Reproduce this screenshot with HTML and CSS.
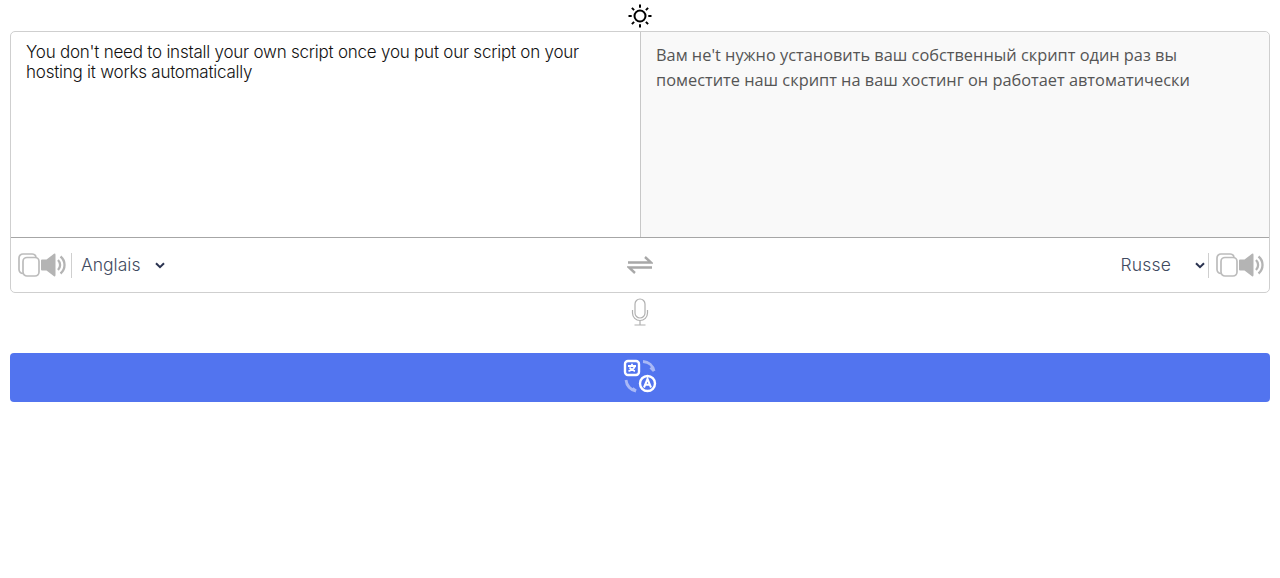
FILE: index.html
```html
<!DOCTYPE html>
<html lang="en">
<head>
  <meta charset="UTF-8" />
  <meta name="viewport" content="width=device-width, initial-scale=1.0" />
  <title>Translator</title>
  <link rel="stylesheet" href="styles.css">
</head>
<body>
  <div class="theme">
    <svg width="26" height="26" viewBox="0 0 26 26" fill="none" stroke="#000" stroke-width="2">
      <circle cx="13" cy="13" r="5.500"/>
      <path d="M13 1.500v3.200M13 21.300v3.200M1.500 13h3.200M21.300 13h3.200M4.900 4.900l2.200 2.200M18.900 18.900l2.200 2.200M4.900 21.100l2.200-2.200M18.900 7.100l2.200-2.200"/>
    </svg>
  </div>

  <div class="box">
    <div class="panes">
      <div class="pane source">You don't need to install your own script once you put our script on your hosting it works automatically</div>
      <div class="pane target">Вам не't нужно установить ваш собственный скрипт один раз вы поместите наш скрипт на ваш хостинг он работает автоматически</div>
    </div>
    <div class="toolbar">
      <div class="side">
        <svg class="copy" width="22" height="24" viewBox="0 0 22 24" fill="none" stroke="#bcbcbc" stroke-width="1.700">
          <rect x="5" y="4.500" width="16" height="18.500" rx="4"/>
          <path d="M5 20.500A4 4 0 0 1 1 16.500V5a4 4 0 0 1 4-4h9a4 4 0 0 1 4 3.500"/>
        </svg>
        <svg class="speaker" width="25" height="24" viewBox="0 0 25 24">
          <path d="M0 7.500Q0 6.500 1 6.500h4.500L13 .8Q14.500 0 14.500 2v20Q14.500 24 13 23.200L5.500 17.500H1Q0 17.500 0 16.500z" fill="#b4b4b4"/>
          <path d="M17 7a7 7 0 0 1 0 10M19.500 3.500a11 11 0 0 1 0 17" fill="none" stroke="#b4b4b4" stroke-width="2.300"/>
        </svg>
        <span class="divider"></span>
        <span class="lang lang-left">Anglais</span>
        <svg class="chevron" width="10" height="7" viewBox="0 0 10 7" fill="none" stroke="#2a3350" stroke-width="2"><path d="M1 1.200l4 4 4-4"/></svg>
      </div>
      <svg class="swap" width="26" height="18" viewBox="0 0 26 18" fill="none" stroke="#a8a8a8" stroke-width="2.400">
        <path d="M1 6.500h23L18 1M25 11.500H2L8 17"/>
      </svg>
      <div class="side side-right">
        <span class="lang lang-right">Russe</span>
        <svg class="chevron" width="10" height="7" viewBox="0 0 10 7" fill="none" stroke="#2a3350" stroke-width="2"><path d="M1 1.200l4 4 4-4"/></svg>
        <span class="divider divider-right"></span>
        <svg class="copy" width="22" height="24" viewBox="0 0 22 24" fill="none" stroke="#bcbcbc" stroke-width="1.700">
          <rect x="5" y="4.500" width="16" height="18.500" rx="4"/>
          <path d="M5 20.500A4 4 0 0 1 1 16.500V5a4 4 0 0 1 4-4h9a4 4 0 0 1 4 3.500"/>
        </svg>
        <svg class="speaker" width="25" height="24" viewBox="0 0 25 24">
          <path d="M0 7.500Q0 6.500 1 6.500h4.500L13 .8Q14.500 0 14.500 2v20Q14.500 24 13 23.200L5.500 17.500H1Q0 17.500 0 16.500z" fill="#b4b4b4"/>
          <path d="M17 7a7 7 0 0 1 0 10M19.500 3.500a11 11 0 0 1 0 17" fill="none" stroke="#b4b4b4" stroke-width="2.300"/>
        </svg>
      </div>
    </div>
  </div>

  <div class="mic">
    <svg width="18" height="28" viewBox="0 0 18 28" fill="none" stroke="#b0b0b0" stroke-width="1.200">
      <rect x="4" y="1" width="10" height="19" rx="5"/>
      <path d="M1.500 12v3a7.500 7.500 0 0 0 15 0v-3M9 22.500V27M3.500 27h11"/>
    </svg>
  </div>

  <button class="go">
    <svg width="34" height="34" viewBox="0 0 34 34" fill="none">
      <rect x="2" y="2" width="14" height="14" rx="3" stroke="#fff" stroke-width="2.400"/>
      <path d="M5 7h8M9 4.800v2.500M12 7c-.8 2.600-3 4.200-6.500 5.200M6.500 8.500c1 1.700 3 3 5.500 3.700" stroke="#fff" stroke-width="1.800"/>
      <circle cx="24.500" cy="24.500" r="7.500" stroke="#fff" stroke-width="2.400"/>
      <path d="M21 28.500l3.500-8.500 3.500 8.500M22.300 25.800h4.400" stroke="#fff" stroke-width="2"/>
      <path d="M20 2.500c5.500.3 10 4 11 9.500M31 12l-3.500-3.500M3 21c.5 5.500 4.500 10 10 11M13 32l-3.500-2.500" stroke="#a9b8f6" stroke-width="2.800"/>
    </svg>
  </button>
</body>
</html>
```

FILE: styles.css
```css
html, body {
  margin: 0;
  background: #fff;
}
body {
  padding: 0 10px;
  height: 578px;
  box-sizing: border-box;
  overflow: hidden;
  font-family: Inter, "Liberation Sans", Arial, sans-serif;
}
svg {
  display: block;
  flex: none;
}
.theme {
  display: flex;
  justify-content: center;
  height: 31px;
  padding-top: 3px;
  box-sizing: border-box;
}
.box {
  border: 1px solid #cfcfcf;
  border-radius: 5px;
  height: 262px;
  box-sizing: border-box;
  display: flex;
  flex-direction: column;
}
.panes {
  display: flex;
  height: 206px;
  border-bottom: 1px solid #a6a6a6;
  box-sizing: border-box;
}
.pane {
  min-width: 0;
  box-sizing: border-box;
}
.source {
  width: calc(50% + 1px);
  flex: none;
  padding: 10px 40px 0 15px;
  font-size: 17px;
  font-weight: 300;
  line-height: 20px;
  letter-spacing: -0.23px;
  color: #111;
  border-right: 1px solid #c8c8c8;
  border-top-left-radius: 5px;
}
.target {
  flex: 1;
  padding: 11px 60px 0 15px;
  font-family: "Open Sans", sans-serif;
  font-size: 16.350px;
  line-height: 25px;
  color: #555;
  background: #f9f9f9;
  border-top-right-radius: 5px;
}
.toolbar {
  flex: 1;
  display: flex;
  align-items: center;
  justify-content: space-between;
  padding: 0 5px 0 7px;
}
.side {
  flex: 1;
  display: flex;
  align-items: center;
}
.side-right {
  justify-content: flex-end;
}
.swap {
  margin-right: 2px;
}
.speaker {
  margin-left: 1px;
}
.divider {
  width: 1px;
  height: 25px;
  background: #cfcfcf;
  margin: 0 9px 0 5px;
}
.divider-right {
  margin: 0 7px 0 3px;
}
.lang {
  font-size: 17.500px;
  font-weight: 300;
  color: #3f4a60;
  margin-bottom: 2px;
}
.lang-left {
  margin-right: 15px;
}
.lang-right {
  margin-right: 24px;
  letter-spacing: 0.2px;
}
.mic {
  display: flex;
  justify-content: center;
  height: 60px;
  padding-top: 5px;
  box-sizing: border-box;
}
.go {
  display: flex;
  align-items: center;
  justify-content: center;
  width: 100%;
  height: 49px;
  padding: 0 0 4px;
  border: 0;
  border-radius: 4px;
  background: #5274ef;
}
```
